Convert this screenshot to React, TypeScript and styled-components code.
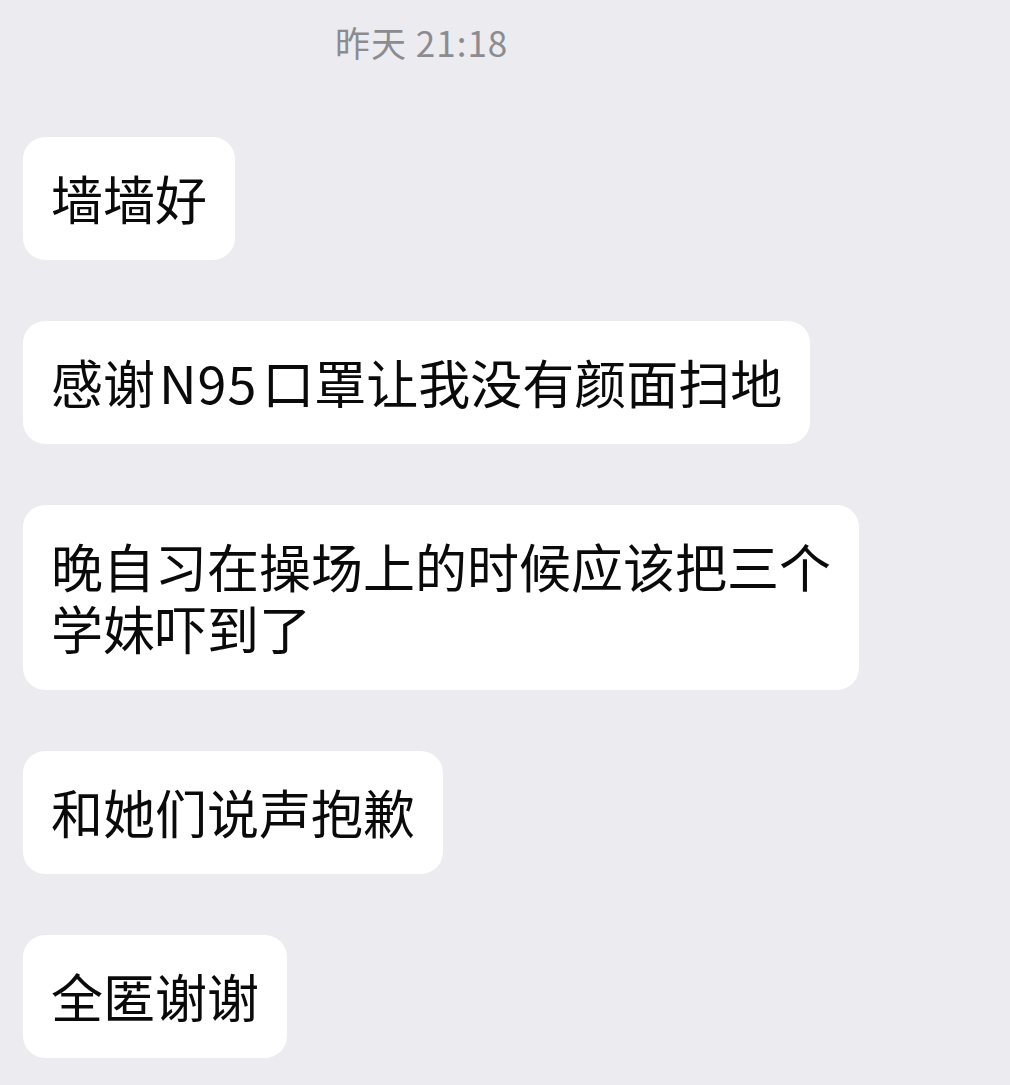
import React from "react";
import styled, { createGlobalStyle } from "styled-components";

const Global = createGlobalStyle`
  html, body { margin: 0; padding: 0; background: #ebebf0; }
  body { font-family: "Noto Sans CJK SC", "Noto Sans", sans-serif; }
`;

const Page = styled.div`
  width: 1010px;
  height: 1085px;
  background: #ebebf0;
  display: flex;
  flex-direction: column;
  padding: 19px 0 0 23px;
  box-sizing: border-box;
  overflow: hidden;
`;

const Time = styled.div`
  margin-left: 312px;
  height: 46px;
  line-height: 46px;
  font-size: 35px;
  letter-spacing: 1px;
  color: #8b8b90;
  margin-bottom: 72px;
`;

const List = styled.div`
  display: flex;
  flex-direction: column;
  align-items: flex-start;
  gap: 61px;
`;

const Bubble = styled.div`
  background: #ffffff;
  border-radius: 22px;
  padding: 30px 28px 31px;
  max-width: 836px;
  box-sizing: border-box;
  font-size: 52px;
  line-height: 62px;
  color: #0a0a0a;
  word-break: break-all;
`;

const Latin = styled.span`
  letter-spacing: 1px;
  margin: 0 5px 0 4px;
`;

export default function App() {
  return (
    <Page>
      <Global />
      <Time>昨天 21:18</Time>
      <List>
        <Bubble>墙墙好</Bubble>
        <Bubble>
          感谢<Latin>N95</Latin>口罩让我没有颜面扫地
        </Bubble>
        <Bubble>晚自习在操场上的时候应该把三个学妹吓到了</Bubble>
        <Bubble>和她们说声抱歉</Bubble>
        <Bubble>全匿谢谢</Bubble>
      </List>
    </Page>
  );
}
